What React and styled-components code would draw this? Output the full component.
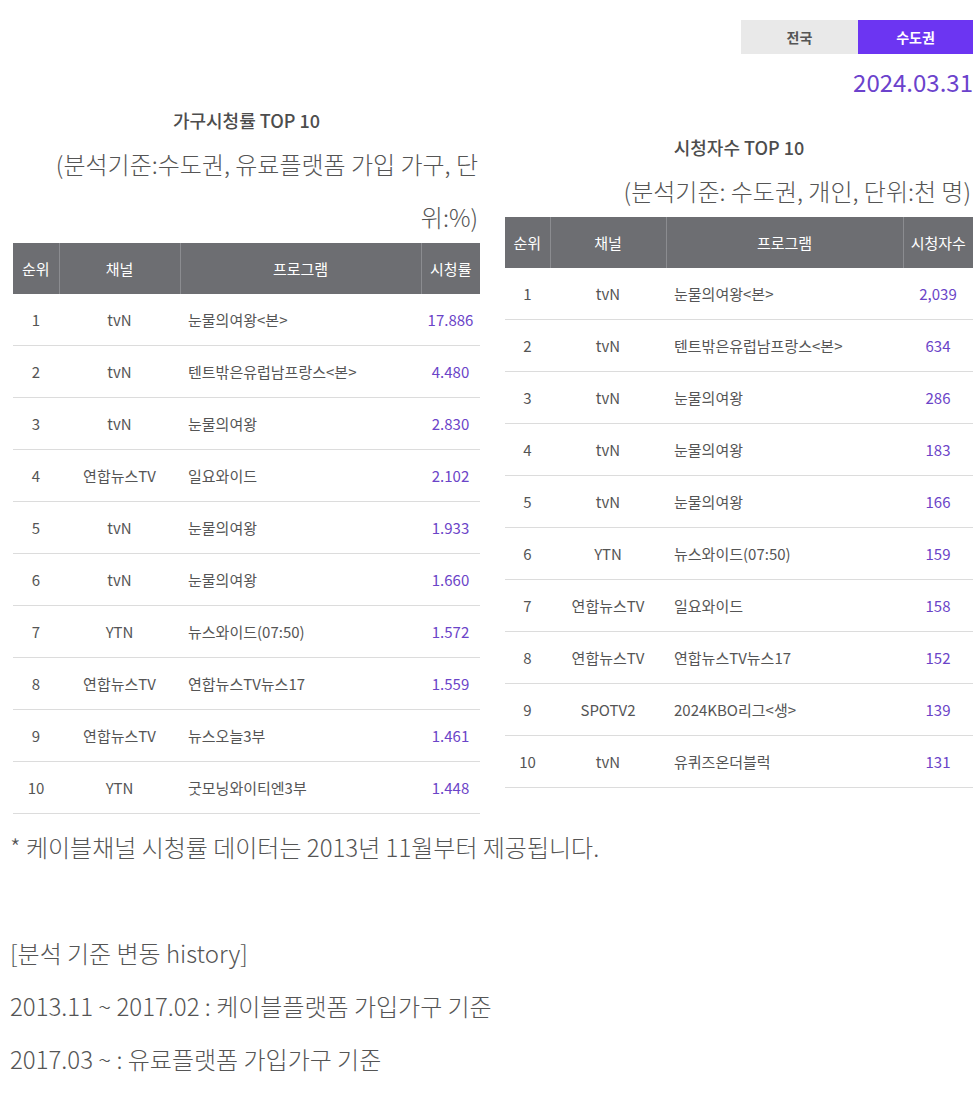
import React from 'react';
import styled, { createGlobalStyle } from 'styled-components';

const GlobalStyle = createGlobalStyle`
  body {
    margin: 0;
    background: #fff;
    font-family: "Noto Sans CJK KR", "Noto Sans", sans-serif;
    color: #555;
  }
`;

const Page = styled.div`
  width: 977px;
`;

const TabBar = styled.div`
  display: flex;
  justify-content: flex-end;
  padding: 20px 4px 0 0;
`;

const Tab = styled.button`
  width: ${(p) => p.$width}px;
  height: 34px;
  border: none;
  font-family: inherit;
  font-size: 14px;
  font-weight: 700;
  background: ${(p) => (p.$active ? '#6c35f2' : '#e9e9e9')};
  color: ${(p) => (p.$active ? '#fff' : '#555')};
  cursor: pointer;
`;

const DateLine = styled.div`
  text-align: right;
  padding-right: 4px;
  margin-top: 13px;
  font-size: 24px;
  line-height: 30px;
  font-weight: 400;
  color: #6b42cc;
`;

const Boards = styled.div`
  display: flex;
  align-items: center;
  gap: 25px;
  margin-top: 11px;
  padding-left: 13px;
`;

const Board = styled.div`
  width: ${(p) => p.$width}px;
`;

const BoardTitle = styled.h3`
  margin: 0 0 5px;
  text-align: center;
  font-size: 18px;
  line-height: 24px;
  font-weight: 500;
  color: #4d4d4d;
`;

const BoardNote = styled.p`
  margin: 0;
  text-align: right;
  font-size: 24px;
  line-height: 53px;
  font-weight: 300;
  color: #555;
  padding-right: 2px;
`;

const Table = styled.table`
  width: 100%;
  border-collapse: collapse;
  table-layout: fixed;
  font-size: 15px;
`;

const Th = styled.th`
  height: 51px;
  padding: 0;
  background: #6d6e72;
  color: #fff;
  font-weight: 400;
  border-left: 1px solid #8b8c90;
  &:first-child {
    border-left: none;
  }
`;

const Td = styled.td`
  height: 51px;
  padding: ${(p) => (p.$left ? '0 0 0 8px' : '0')};
  text-align: ${(p) => (p.$left ? 'left' : 'center')};
  color: ${(p) => (p.$value ? '#6b44c8' : '#555')};
  border-bottom: 1px solid #dcdcdc;
  white-space: nowrap;
`;

const Notes = styled.div`
  margin-top: 6px;
  padding-left: 10px;
  font-size: 24px;
  line-height: 53px;
  font-weight: 300;
  color: #555;
`;

const NoteLine = styled.div`
  min-height: 53px;
`;

const ratings = [
  ['1', 'tvN', '눈물의여왕<본>', '17.886'],
  ['2', 'tvN', '텐트밖은유럽남프랑스<본>', '4.480'],
  ['3', 'tvN', '눈물의여왕', '2.830'],
  ['4', '연합뉴스TV', '일요와이드', '2.102'],
  ['5', 'tvN', '눈물의여왕', '1.933'],
  ['6', 'tvN', '눈물의여왕', '1.660'],
  ['7', 'YTN', '뉴스와이드(07:50)', '1.572'],
  ['8', '연합뉴스TV', '연합뉴스TV뉴스17', '1.559'],
  ['9', '연합뉴스TV', '뉴스오늘3부', '1.461'],
  ['10', 'YTN', '굿모닝와이티엔3부', '1.448'],
];

const viewers = [
  ['1', 'tvN', '눈물의여왕<본>', '2,039'],
  ['2', 'tvN', '텐트밖은유럽남프랑스<본>', '634'],
  ['3', 'tvN', '눈물의여왕', '286'],
  ['4', 'tvN', '눈물의여왕', '183'],
  ['5', 'tvN', '눈물의여왕', '166'],
  ['6', 'YTN', '뉴스와이드(07:50)', '159'],
  ['7', '연합뉴스TV', '일요와이드', '158'],
  ['8', '연합뉴스TV', '연합뉴스TV뉴스17', '152'],
  ['9', 'SPOTV2', '2024KBO리그<생>', '139'],
  ['10', 'tvN', '유퀴즈온더블럭', '131'],
];

const RankTable = ({ cols, heads, rows }) => (
  <Table>
    <colgroup>
      {cols.map((w, i) => (
        <col key={i} style={{ width: w }} />
      ))}
    </colgroup>
    <thead>
      <tr>
        {heads.map((h) => (
          <Th key={h}>{h}</Th>
        ))}
      </tr>
    </thead>
    <tbody>
      {rows.map((r) => (
        <tr key={r[0]}>
          <Td>{r[0]}</Td>
          <Td>{r[1]}</Td>
          <Td $left>{r[2]}</Td>
          <Td $value>{r[3]}</Td>
        </tr>
      ))}
    </tbody>
  </Table>
);

export default function App() {
  return (
    <Page>
      <GlobalStyle />
      <TabBar>
        <Tab $width={117}>전국</Tab>
        <Tab $width={115} $active>
          수도권
        </Tab>
      </TabBar>
      <DateLine>2024.03.31</DateLine>

      <Boards>
        <Board $width={467}>
          <BoardTitle>가구시청률 TOP 10</BoardTitle>
          <BoardNote>(분석기준:수도권, 유료플랫폼 가입 가구, 단위:%)</BoardNote>
          <RankTable
            cols={[46, 121, 241, 59]}
            heads={['순위', '채널', '프로그램', '시청률']}
            rows={ratings}
          />
        </Board>
        <Board $width={468}>
          <BoardTitle>시청자수 TOP 10</BoardTitle>
          <BoardNote>(분석기준: 수도권, 개인, 단위:천 명)</BoardNote>
          <RankTable
            cols={[45, 116, 237, 70]}
            heads={['순위', '채널', '프로그램', '시청자수']}
            rows={viewers}
          />
        </Board>
      </Boards>

      <Notes>
        <NoteLine>* 케이블채널 시청률 데이터는 2013년 11월부터 제공됩니다.</NoteLine>
        <NoteLine />
        <NoteLine>[분석 기준 변동 history]</NoteLine>
        <NoteLine>2013.11 ~ 2017.02 : 케이블플랫폼 가입가구 기준</NoteLine>
        <NoteLine>2017.03 ~ : 유료플랫폼 가입가구 기준</NoteLine>
      </Notes>
    </Page>
  );
}
